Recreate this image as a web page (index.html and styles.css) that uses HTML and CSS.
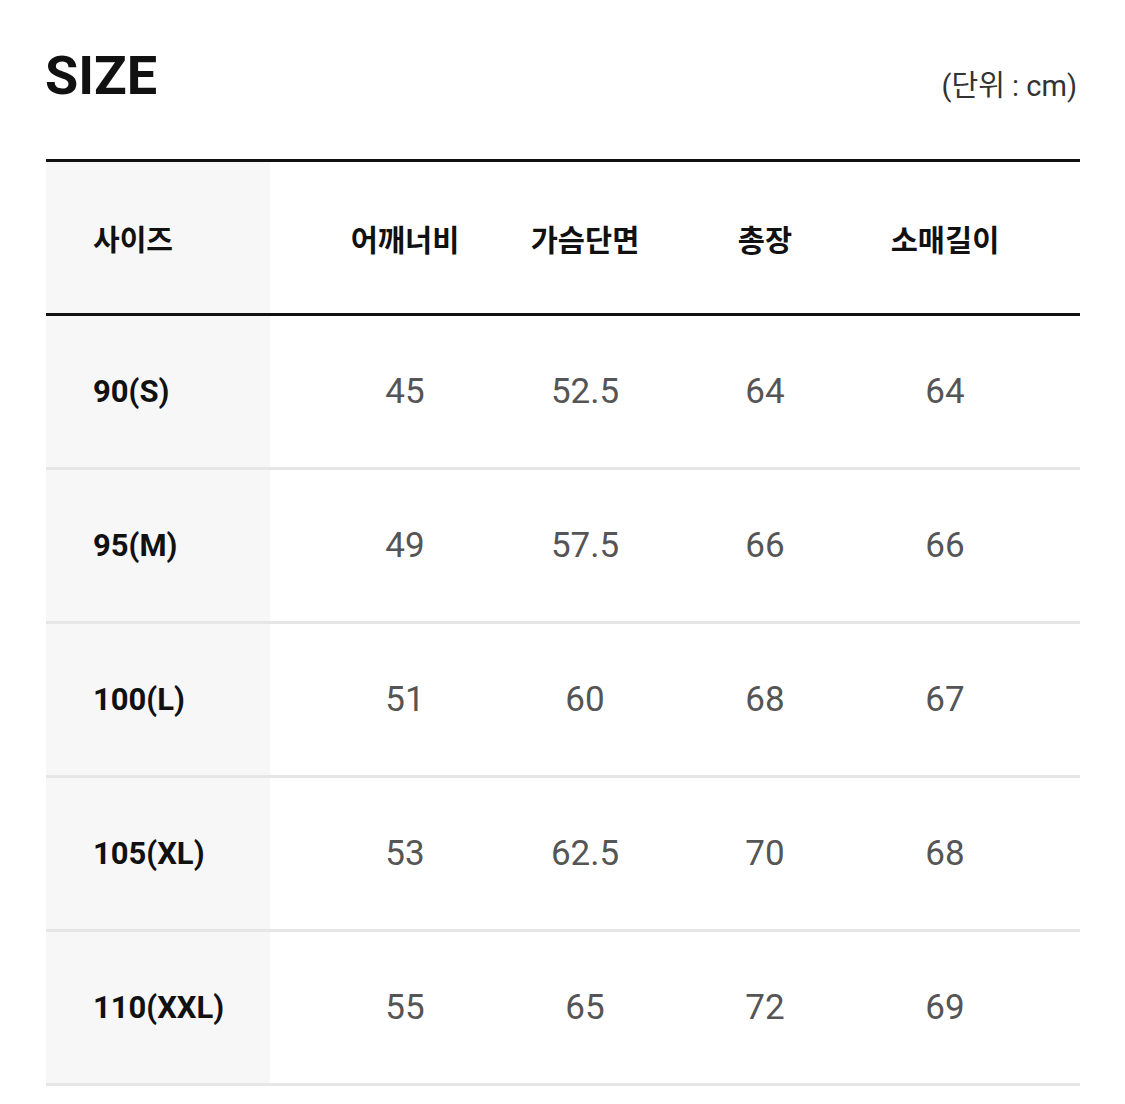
FILE: index.html
```html
<!DOCTYPE html>
<html lang="ko">
<head>
<meta charset="utf-8">
<title>SIZE</title>
<link rel="stylesheet" href="styles.css">
</head>
<body>
<div class="page">
  <div class="title-row">
    <h1 class="title">SIZE</h1>
    <div class="unit">(단위 : cm)</div>
  </div>
  <div class="table">
    <div class="row head">
      <div class="label">사이즈</div>
      <div class="vals"><span>어깨너비</span><span>가슴단면</span><span>총장</span><span>소매길이</span></div>
    </div>
    <div class="row">
      <div class="label">90(S)</div>
      <div class="vals"><span>45</span><span>52.5</span><span>64</span><span>64</span></div>
    </div>
    <div class="row">
      <div class="label">95(M)</div>
      <div class="vals"><span>49</span><span>57.5</span><span>66</span><span>66</span></div>
    </div>
    <div class="row">
      <div class="label">100(L)</div>
      <div class="vals"><span>51</span><span>60</span><span>68</span><span>67</span></div>
    </div>
    <div class="row">
      <div class="label">105(XL)</div>
      <div class="vals"><span>53</span><span>62.5</span><span>70</span><span>68</span></div>
    </div>
    <div class="row">
      <div class="label">110(XXL)</div>
      <div class="vals"><span>55</span><span>65</span><span>72</span><span>69</span></div>
    </div>
  </div>
</div>
</body>
</html>
```
FILE: styles.css
```css
html, body {
  margin: 0;
  padding: 0;
  background: #fff;
}
body {
  font-family: Roboto, "Noto Sans CJK KR", sans-serif;
  color: #111;
}
.page {
  width: 1034px;
  padding: 0 0 0 46px;
}
.title-row {
  display: flex;
  justify-content: space-between;
  align-items: flex-end;
  height: 159px;
}
.title {
  margin: 0 0 0 -1px;
  font-size: 54px;
  font-weight: 700;
  line-height: 1;
  letter-spacing: 0;
  align-self: flex-start;
  margin-top: 49px;
  color: #111;
}
.unit {
  font-size: 29px;
  color: #333;
  line-height: 1;
  margin-bottom: 58px;
  margin-right: 3px;
  letter-spacing: 0;
}
.table {
  border-top: 3px solid #111;
}
.row {
  display: flex;
  height: 151px;
  border-bottom: 3px solid #e6e6e6;
}
.row.head {
  border-bottom-color: #111;
}
.label {
  width: 224px;
  flex: none;
  background: #f7f7f7;
  box-sizing: border-box;
  padding-left: 47px;
  display: flex;
  align-items: center;
  font-size: 31px;
  font-weight: 700;
  color: #111;
}
.head .label {
  font-size: 29px;
}
.vals {
  flex: 1;
  display: grid;
  grid-template-columns: repeat(4, 180px);
  padding: 0 45px;
  align-items: center;
}
.vals span {
  text-align: center;
  font-size: 35px;
  color: #555;
}
.head .vals span {
  font-size: 29.5px;
  font-weight: 700;
  color: #111;
}
```
